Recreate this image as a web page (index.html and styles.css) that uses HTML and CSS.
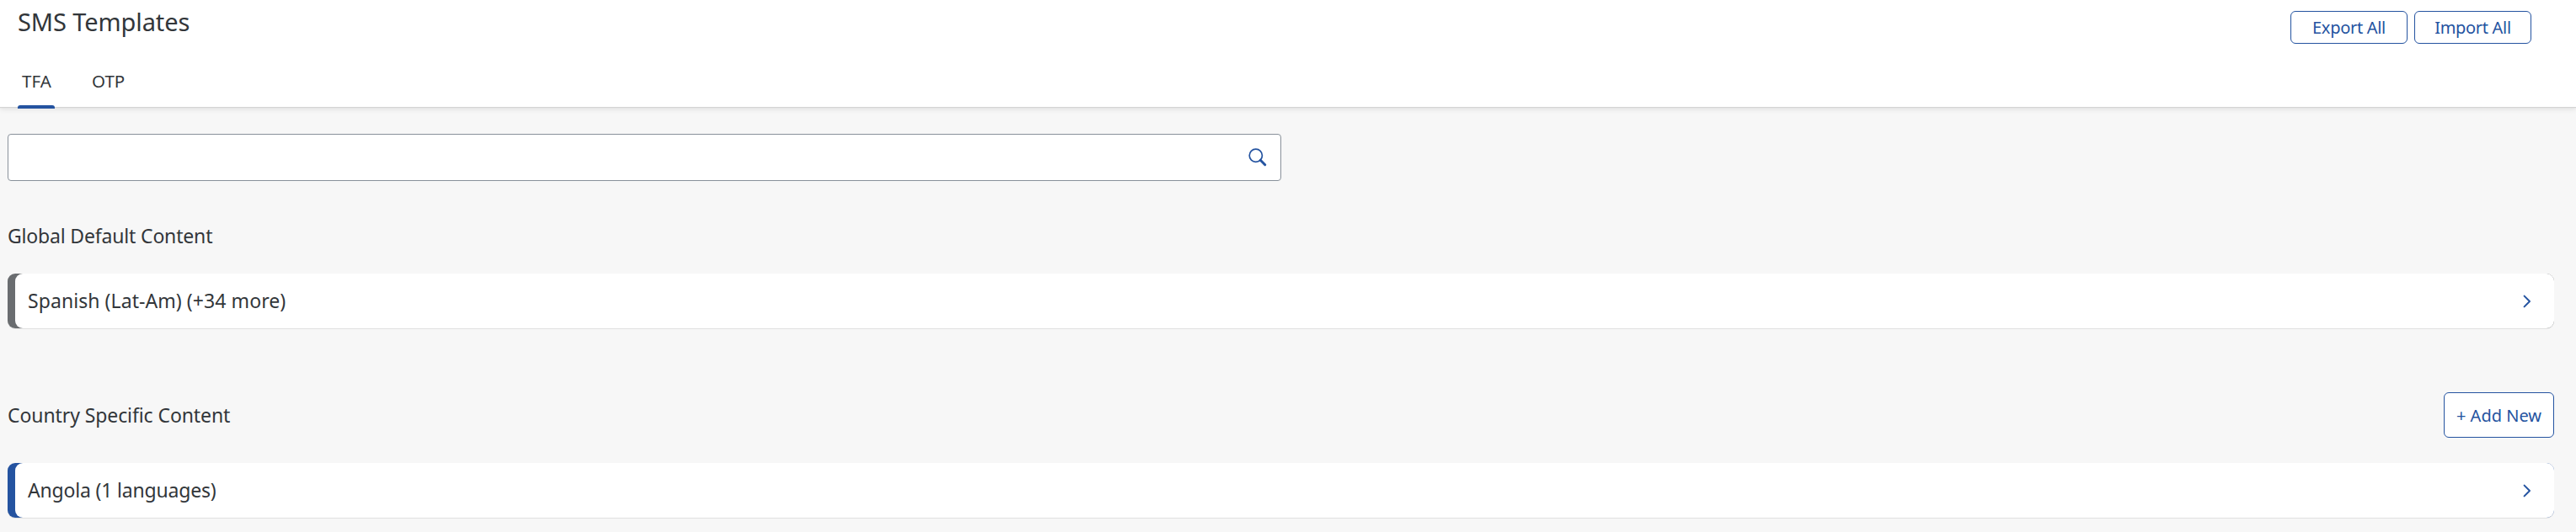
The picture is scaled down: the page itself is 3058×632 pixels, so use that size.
FILE: index.html
```html
<!DOCTYPE html>
<html lang="en">
<head>
<meta charset="utf-8">
<title>SMS Templates</title>
<link rel="stylesheet" href="styles.css">
</head>
<body>
<header class="header">
  <div class="title-row">
    <h1 class="title">SMS Templates</h1>
    <div class="actions">
      <button class="button"><span class="action-text">Export All</span></button>
      <button class="button"><span class="action-text">Import All</span></button>
    </div>
  </div>
  <nav class="tabs">
    <a class="tab selected">TFA</a>
    <a class="tab">OTP</a>
  </nav>
</header>
<main class="content">
  <div class="search">
    <svg class="search-icon" width="22" height="22" viewBox="0 0 22 22"><circle cx="8.8" cy="8.8" r="7.6" fill="none" stroke="#2453a0" stroke-width="1.7"/><path d="M14.3 14.3L19.7 19.7" stroke="#2453a0" stroke-width="3" stroke-linecap="round"/></svg>
  </div>
  <section class="section global">
    <div class="section-head"><h2 class="heading global-text">Global Default Content</h2></div>
    <div class="card grey"><div class="card-body"><span class="label spanish">Spanish (Lat-Am) (+34 more)</span>
      <svg class="chevron" width="10" height="16" viewBox="0 0 10 16"><path d="M1.6 1.6L8 8L1.6 14.4" fill="none" stroke="#2453a0" stroke-width="2" stroke-linecap="round" stroke-linejoin="round"/></svg></div></div>
  </section>
  <section class="section country">
    <div class="section-head"><h2 class="heading country-text">Country Specific Content</h2><button class="button add">+ Add New</button></div>
    <div class="card blue"><div class="card-body"><span class="label angola">Angola (1 languages)</span>
      <svg class="chevron" width="10" height="16" viewBox="0 0 10 16"><path d="M1.6 1.6L8 8L1.6 14.4" fill="none" stroke="#2453a0" stroke-width="2" stroke-linecap="round" stroke-linejoin="round"/></svg></div></div>
  </section>
</main>
</body>
</html>
```
FILE: styles.css
```css
* { box-sizing: border-box; }
body { margin: 0; height: 632px; overflow: hidden; background: #f7f7f7; color: #32363a; font-family: "Noto Sans", sans-serif; }
h1, h2 { margin: 0; font-weight: 400; white-space: nowrap; }
.header { position: relative; height: 127px; background: #fff; box-shadow: 0 1px 1px #d4d4d4, 0 3px 6px rgba(0, 0, 0, .09); }
.title-row { display: flex; justify-content: space-between; height: 66px; padding: 0 53px 0 21px; }
.title { font-size: 29px; line-height: 38px; padding-top: 7px; letter-spacing: -.1px; }
.actions { display: flex; gap: 8px; padding-top: 13px; }
.button { width: 139px; height: 39px; padding: 0; border: 1px solid #2453a0; border-radius: 6px; background: #fff; color: #2453a0; font: 20px "Noto Sans", sans-serif; white-space: nowrap; }
.action-text { letter-spacing: -.3px; }
.tabs { display: flex; gap: 39px; height: 63px; padding-left: 21px; font-size: 20.5px; }
.tab { height: 63px; padding: 0 5px; line-height: 60px; }
.selected { position: relative; width: 44px; }
.selected::after { content: ""; position: absolute; left: 0; right: 0; bottom: 0; height: 4px; border-radius: 3px 3px 0 0; background: #2453a0; }
.content { padding: 32px 26px 0 9px; }
.search { display: flex; align-items: center; justify-content: flex-end; width: 1512px; height: 56px; padding-right: 16px; border: 1px solid #89919a; border-radius: 4px; background: #fff; }
.section-head { display: flex; justify-content: space-between; align-items: center; }
.global { padding-top: 38px; }
.global .section-head { height: 54px; margin-bottom: 18px; }
.country { padding-top: 76px; }
.country .section-head { height: 54px; margin-bottom: 30px; }
.heading { font-size: 23px; line-height: 32px; padding-bottom: 1px; }
.global-text { letter-spacing: -.17px; }
.country-text { letter-spacing: -.09px; }
.add { width: 131px; height: 54px; }
.card { height: 65px; padding-left: 9px; border-radius: 9px; box-shadow: 0 1px #e0e0e0; }
.grey { background: #6a6d70; }
.blue { background: #2453a0; }
.card-body { display: flex; align-items: center; justify-content: space-between; height: 65px; padding: 0 27px 0 15px; border-radius: 9px; background: #fff; font-size: 23px; }
.label { padding-bottom: 2px; }
.spanish { letter-spacing: .07px; }
.angola { letter-spacing: -.18px; }
```
